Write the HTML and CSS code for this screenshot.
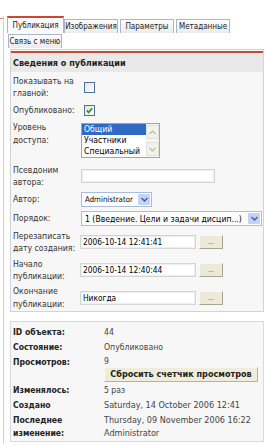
FILE: index.html
```html
<!DOCTYPE html>
<html lang="ru">
<head>
  <meta charset="UTF-8" />
  <title>Публикация</title>
  <link rel="stylesheet" href="styles.css">
</head>
<body>

  <div class="gutter"></div>

  <div class="frame">
    <div class="tabs">
      <span class="tab active">Публикация</span>
      <span class="tab">Изображения</span>
      <span class="tab">Параметры</span>
      <span class="tab">Метаданные</span>
      <span class="tab">Связь с меню</span>
    </div>

    <div class="panel">
      <div class="panel-head">Сведения о публикации</div>
      <div class="form">
        <div class="row">
          <div class="label">Показывать на главной:</div>
          <span class="cb"></span>
        </div>
        <div class="row check">
          <div class="label">Опубликовано:</div>
          <span class="cb">
            <svg width="9" height="9" viewBox="0 0 9 9"><path d="M1.8 4.4 L3.6 6.4 L7.2 2.2" fill="none" stroke="#21a121" stroke-width="1.7"/></svg>
          </span>
        </div>
        <div class="row list">
          <div class="label">Уровень доступа:</div>
          <div class="listbox">
            <div class="options">
              <div class="opt sel">Общий</div>
              <div class="opt">Участники</div>
              <div class="opt">Специальный</div>
            </div>
            <div class="scroll">
              <span><svg width="7" height="5" viewBox="0 0 7 5"><path d="M0.5 4 L3.5 1 L6.5 4" fill="none" stroke="#b9b9b0" stroke-width="1.2"/></svg></span>
              <span><svg width="7" height="5" viewBox="0 0 7 5"><path d="M0.5 1 L3.5 4 L6.5 1" fill="none" stroke="#b9b9b0" stroke-width="1.2"/></svg></span>
            </div>
          </div>
        </div>
        <div class="row">
          <div class="label">Псевдоним автора:</div>
          <div class="text alias"></div>
        </div>
        <div class="row single">
          <div class="label">Автор:</div>
          <div class="select author">
            <span class="val">Administrator</span>
            <span class="arrow"><svg width="7" height="5" viewBox="0 0 7 5"><path d="M0.5 1 L3.5 4 L6.5 1" fill="none" stroke="#4d6185" stroke-width="1.5"/></svg></span>
          </div>
        </div>
        <div class="row single">
          <div class="label">Порядок:</div>
          <div class="select order">
            <span class="val">1 (Введение. Цели и задачи дисцип...)</span>
            <span class="arrow"><svg width="7" height="5" viewBox="0 0 7 5"><path d="M0.5 1 L3.5 4 L6.5 1" fill="none" stroke="#4d6185" stroke-width="1.5"/></svg></span>
          </div>
        </div>
        <div class="row">
          <div class="label">Перезаписать дату создания:</div>
          <div class="text date">2006-10-14 12:41:41</div>
          <span class="dots">...</span>
        </div>
        <div class="row">
          <div class="label">Начало публикации:</div>
          <div class="text date">2006-10-14 12:40:44</div>
          <span class="dots">...</span>
        </div>
        <div class="row">
          <div class="label">Окончание публикации:</div>
          <div class="text date">Никогда</div>
          <span class="dots">...</span>
        </div>
      </div>
    </div>

    <div class="panel info">
      <div class="info-row">
        <div class="key">ID объекта:</div>
        <div>44</div>
      </div>
      <div class="info-row">
        <div class="key">Состояние:</div>
        <div>Опубликовано</div>
      </div>
      <div class="info-row">
        <div class="key">Просмотров:</div>
        <div>
          <div class="hits">9</div>
          <div class="reset">Сбросить счетчик просмотров</div>
        </div>
      </div>
      <div class="info-row">
        <div class="key">Изменялось:</div>
        <div>5 раз</div>
      </div>
      <div class="info-row">
        <div class="key">Создано</div>
        <div class="latin">Saturday, 14 October 2006 12:41</div>
      </div>
      <div class="info-row">
        <div class="key">Последнее изменение:</div>
        <div class="latin">Thursday, 09 November 2006 16:22<br>Administrator</div>
      </div>
    </div>
  </div>

</body>
</html>
```

FILE: styles.css
```css
body {
  margin: 0;
  background: #fff;
  font-family: "DejaVu Sans Condensed", "DejaVu Sans", sans-serif;
  font-stretch: condensed;
  font-size: 8.6px;
  color: #333;
  display: flex;
}
.gutter {
  width: 3px;
  height: 1px;
  margin-top: 18px;
  background: #d98a7a;
}
.frame {
  flex: 1;
  margin-top: 16px;
  border-left: 1px solid #d2d2d2;
  padding-left: 3px;
  min-height: 428px;
}

/* tabs */
.tabs {
  display: flex;
  flex-wrap: wrap;
  align-items: flex-end;
  width: 226px;
  row-gap: 1px;
}
.tab {
  width: 54px;
  box-sizing: border-box;
  height: 14px;
  line-height: 13px;
  text-align: center;
  font-size: 8px;
  border: 1px solid #a9b7c8;
  border-bottom: none;
  background: linear-gradient(#fdfdfd, #ebebeb);
  margin-right: 2px;
  color: #222;
  white-space: nowrap;
}
.tab.active {
  width: 57px;
  border-top: 2px solid #c64934;
  height: 17px;
  line-height: 16px;
  background: #fafafa;
  margin-right: 0;
}
.tab:last-child {
  margin-left: 1px;
}

/* panels */
.panel {
  margin: 1px 1px 0 3px;
  border: 1px solid #d3d3d3;
  background: #f7f7f7;
  padding-top: 1px;
}
.panel-head {
  border-top: 2px solid #c64934;
  background: #e9e9e9;
  height: 19px;
  line-height: 20px;
  padding-left: 2px;
  font-weight: bold;
  font-size: 9px;
  color: #222;
}
.form {
  padding-top: 1px;
}
.row {
  display: flex;
  align-items: center;
  height: 28px;
  padding-left: 2px;
}
.row.check {
  height: 18px;
}
.row.single {
  height: 19px;
}
.row.list {
  height: 43px;
  align-items: flex-start;
}
.row:last-child {
  height: 27px;
}
.label {
  width: 68px;
  flex-shrink: 0;
  line-height: 12.5px;
}
.row.list .label {
  padding-top: 2px;
}

.cb {
  width: 11px;
  height: 11px;
  box-sizing: border-box;
  margin-left: 3px;
  border: 1px solid #4f6f94;
  background: linear-gradient(135deg, #e4e4de, #fff);
  display: flex;
  align-items: center;
  justify-content: center;
}

.listbox {
  width: 79px;
  height: 35px;
  box-sizing: border-box;
  margin-top: 4px;
  border: 1px solid #8ea8c6;
  background: #fff;
  display: flex;
}
.options {
  flex: 1;
}
.opt {
  height: 11px;
  line-height: 11px;
  padding-left: 2px;
  color: #000;
}
.opt.sel {
  background: #316ac5;
  color: #fff;
}
.scroll {
  width: 13px;
  display: flex;
  flex-direction: column;
  justify-content: space-between;
  background: #f6f6f2;
  padding: 1px 0;
}
.scroll span {
  height: 12px;
  border: 1px solid #e2e1d8;
  border-radius: 1px;
  background: #f2f1ea;
  display: flex;
  align-items: center;
  justify-content: center;
}

.text {
  height: 14px;
  box-sizing: border-box;
  border: 1px solid #d4d4d4;
  box-shadow: inset 0 0 0 1px #efefef;
  background: #fff;
  padding-left: 2px;
  line-height: 12px;
  color: #000;
  white-space: nowrap;
}
.text.alias {
  width: 134px;
}
.text.date {
  width: 116px;
  margin-left: -1px;
  font-size: 8.3px;
}

.select {
  height: 15px;
  box-sizing: border-box;
  border: 1px solid #a9bcd8;
  background: #fff;
  display: flex;
  align-items: center;
}
.select.author {
  width: 71px;
}
.select.order {
  width: 181px;
}
.select .val {
  flex: 1;
  padding-left: 3px;
  color: #000;
  white-space: nowrap;
  overflow: hidden;
}
.select.author .val {
  font-size: 7.8px;
}
.select .arrow {
  width: 12px;
  height: 11px;
  margin-right: 1px;
  border-radius: 1px;
  background: #c2d2fb;
  display: flex;
  align-items: center;
  justify-content: center;
}

.dots {
  width: 24px;
  height: 14px;
  box-sizing: border-box;
  margin-left: 3px;
  background: #ece9d8;
  border: 1px solid;
  border-color: #f8f7f0 #a8a692 #a8a692 #f8f7f0;
  text-align: center;
  line-height: 12px;
  font-size: 7px;
  color: #444;
}

/* info */
.panel.info {
  margin-top: 9px;
  padding-top: 3px;
  border-color: #dadada;
  color: #444;
}
.info-row {
  display: grid;
  grid-template-columns: 91px 1fr;
  padding: 1px 0 1px 2px;
  line-height: 13px;
}
.key {
  font-weight: bold;
  color: #222;
}
.latin {
  font-size: 9px;
}
.hits {
  line-height: 11px;
}
.reset {
  width: 154px;
  height: 15px;
  box-sizing: border-box;
  background: #efedd9;
  border: 1px solid;
  border-color: #f8f7f0 #b5b3a0 #b5b3a0 #f8f7f0;
  text-align: center;
  line-height: 13px;
  font-weight: bold;
  font-size: 9px;
  color: #222;
}
```
